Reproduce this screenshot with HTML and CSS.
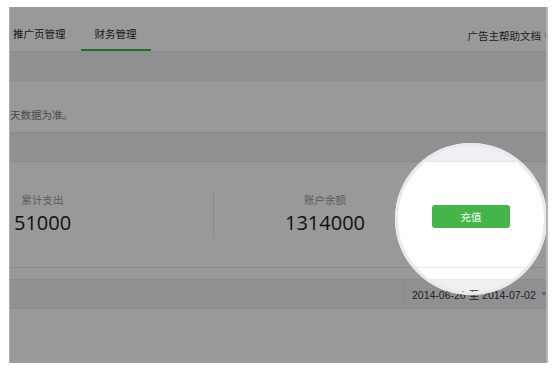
FILE: index.html
```html
<!DOCTYPE html>
<html lang="zh-CN">
<head>
<meta charset="utf-8">
<title>财务管理</title>
<link rel="stylesheet" href="styles.css">
</head>
<body>
<div class="frame">
  <header class="nav">
    <div class="tabs">
      <a class="tab">推广页管理</a>
      <a class="tab active">财务管理</a>
    </div>
    <div class="help"><span>广告主帮助文档</span><span class="help-icon"></span></div>
  </header>
  <div class="band"></div>
  <p class="note">天数据为准。</p>
  <div class="band band-mid"></div>
  <section class="stats">
    <div class="stat stat-first">
      <div class="stat-inner">
        <div class="label">累计支出</div>
        <div class="value">51000</div>
      </div>
    </div>
    <div class="divider"></div>
    <div class="stat stat-second">
      <div class="label">账户余额</div>
      <div class="value">1314000</div>
    </div>
    <div class="stat-action"><button class="btn">充值</button></div>
  </section>
  <div class="gap"></div>
  <div class="band band-filter">
    <div class="date">2014-06-26 至 2014-07-02<span class="caret"></span></div>
  </div>
  <div class="rest"></div>
  <div class="spotlight"></div>
</div>
</body>
</html>
```

FILE: styles.css
```css
* { box-sizing: border-box; }
html, body { margin: 0; padding: 0; background: #fff; }
body {
  font-family: "Noto Sans CJK SC", "Noto Sans", sans-serif;
  color: #333;
}
.frame {
  position: relative;
  overflow: hidden;
  margin: 7px 0 0 9px;
  width: 539px;
  height: 356px;
  background: #fff;
  border-left: 1px solid #ababab;
  border-right: 2px solid #b4b4b4;
}
.nav {
  height: 45px;
  display: flex;
  align-items: flex-end;
  justify-content: space-between;
  border-bottom: 1px solid #e3e4e8;
}
.tabs { display: flex; margin-left: -11px; }
.tab {
  display: block;
  padding: 0 14px 5px;
  font-size: 10.5px;
  line-height: 20px;
  color: #2a2a2a;
  border-bottom: 2px solid transparent;
}
.tab.active { border-bottom-color: #44b549; margin-left: 1px; }
.help {
  display: flex;
  align-items: center;
  gap: 4px;
  height: 20px;
  margin-bottom: 6px;
  margin-right: -11px;
  font-size: 10.5px;
  color: #333;
}
.help-icon {
  width: 12px;
  height: 12px;
  border-radius: 50%;
  border: 1px solid #c4c4c4;
}
.band {
  height: 29px;
  background: #eff0f3;
}
.note {
  margin: 0;
  padding: 26px 0 9px;
  font-size: 10.5px;
  line-height: 16px;
  color: #7d7d7d;
  border-bottom: 1px solid #e3e4e8;
}
.band-mid {
  height: 29px;
  border-bottom: 1px solid #e3e4e8;
}
.stats {
  height: 106px;
  display: flex;
  align-items: center;
  border-bottom: 1px solid #e6e7eb;
}
.stat-first { width: 203px; }
.stat-inner {
  display: inline-block;
  margin-left: 4px;
  text-align: center;
}
.stat-second {
  width: 218px;
  padding-left: 4px;
  text-align: center;
}
.label {
  font-size: 10.5px;
  line-height: 16px;
  color: #999;
}
.value {
  font-family: "Open Sans", "Noto Sans", sans-serif;
  font-size: 20px;
  line-height: 29px;
  color: #1a1a1a;
}
.divider {
  width: 1px;
  height: 45px;
  background: #e6e7eb;
}
.stat-action { display: flex; padding-top: 3px; }
.btn {
  width: 78px;
  height: 23px;
  border: 0;
  border-radius: 3px;
  background: #44b549;
  color: #fff;
  font-family: "Noto Sans CJK SC", sans-serif;
  font-size: 10.5px;
  padding: 0;
}
.gap {
  height: 12px;
  border-bottom: 1px solid #e6e7eb;
}
.band-filter {
  height: 29px;
  display: flex;
  justify-content: flex-end;
  border-bottom: 1px solid #e3e4e8;
}
.date {
  width: 143px;
  flex-shrink: 0;
  display: flex;
  align-items: center;
  gap: 5px;
  padding-left: 8px;
  border-left: 1px solid #e0e1e5;
  font-family: "Liberation Sans", "Noto Sans CJK SC", sans-serif;
  font-size: 10.5px;
  color: #333;
  white-space: nowrap;
}
.caret {
  width: 0;
  height: 0;
  border-left: 3px solid transparent;
  border-right: 3px solid transparent;
  border-top: 4px solid #aaa;
}
.rest { height: 60px; }
.spotlight {
  position: absolute;
  left: 385px;
  top: 136px;
  width: 152px;
  height: 152px;
  border-radius: 50%;
  border: 3px solid #e9e9e9;
  box-shadow: 0 0 0 9999px rgba(0, 0, 0, 0.4);
  pointer-events: none;
}
```
